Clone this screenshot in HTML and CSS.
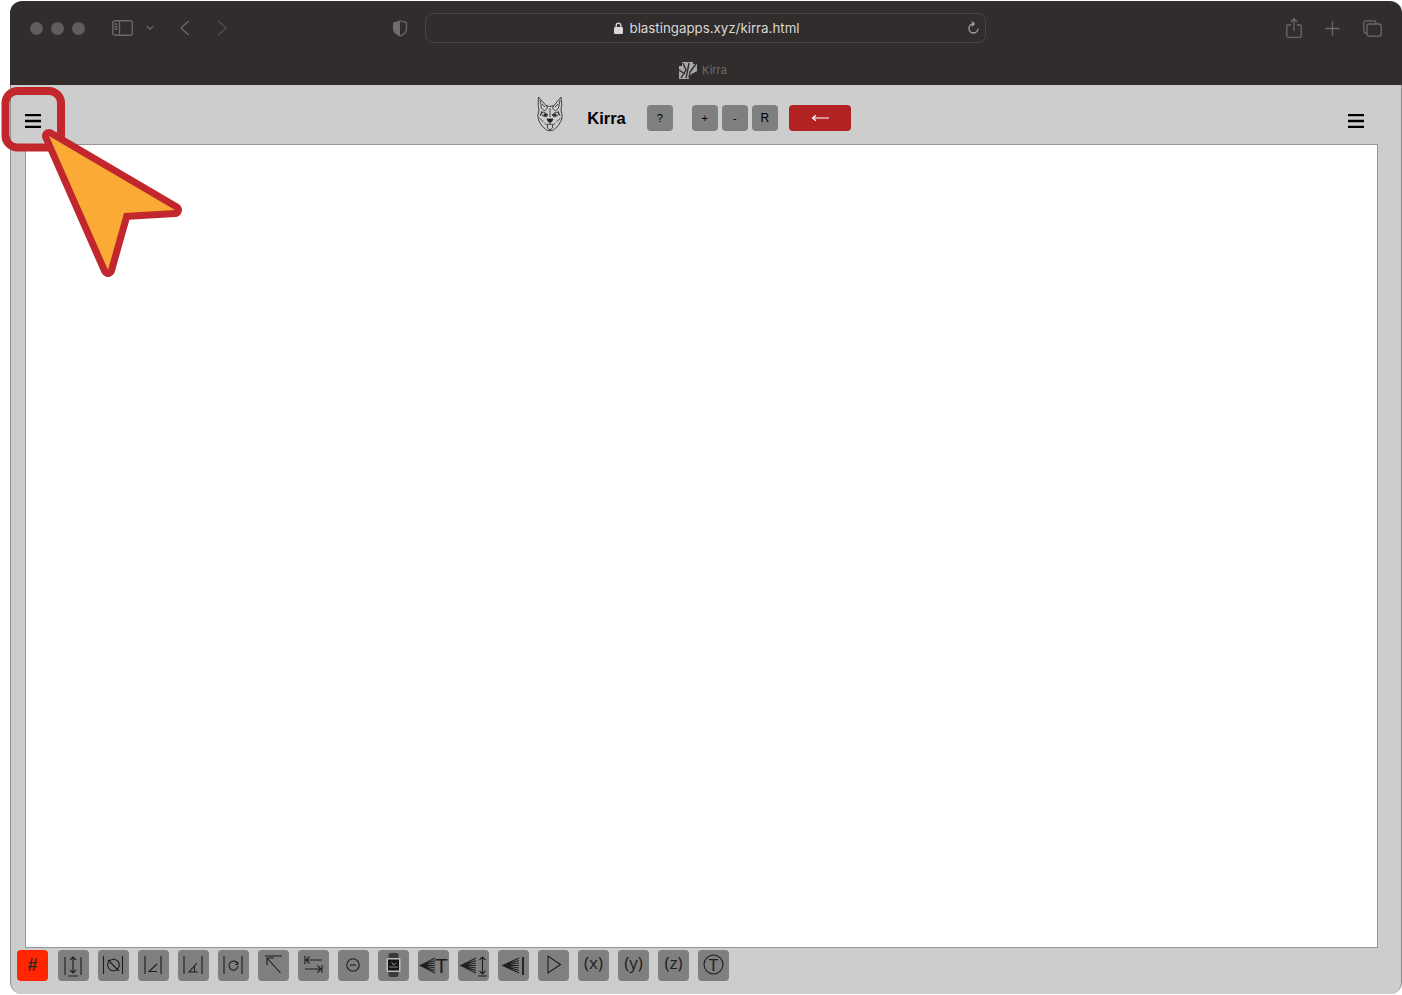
FILE: index.html
```html
<!DOCTYPE html>
<html lang="en">
<head>
    <meta charset="UTF-8">
    <title>Kirra</title>
    <link rel="stylesheet" href="styles.css">
</head>
<body>
    <div class="window">
        <div class="chrome">
            <div class="chrome-top">
                <div class="lights"><span></span><span></span><span></span></div>
                <svg class="ic-sidebar" width="21" height="16" viewBox="0 0 21 16">
                    <rect x="0.75" y="0.75" width="19.5" height="14.5" rx="2"/>
                    <path d="M7.5 1v14M2.5 4h3M2.5 6.5h3M2.5 9h3"/>
                </svg>
                <svg class="ic-chevron" width="8" height="6" viewBox="0 0 8 6"><path d="M1 1.2l3 3 3-3"/></svg>
                <svg class="ic-back" width="11" height="16" viewBox="0 0 11 16"><path d="M9.5 1L2 8l7.5 7"/></svg>
                <svg class="ic-forward" width="11" height="16" viewBox="0 0 11 16"><path d="M1.5 1L9 8l-7.5 7"/></svg>
                <svg class="ic-shield" width="16" height="17" viewBox="0 0 16 17">
                    <path class="fill-half" d="M8 0.5L1 2.5v6c0 4 3.5 6.5 7 8z"/>
                    <path d="M8 0.8l6.5 1.9v5.8c0 3.7-3 6.2-6.5 7.7"/>
                </svg>
                <div class="urlbar">
                    <span></span>
                    <div class="url">
                        <svg width="9" height="12" viewBox="0 0 9 12">
                            <path class="lock-loop" d="M2.2 5.5V3.4a2.3 2.3 0 0 1 4.6 0v2.1"/>
                            <rect class="lock-body" y="5" width="9" height="7" rx="1.2"/>
                        </svg>
                        blastingapps.xyz/kirra.html
                    </div>
                    <svg class="ic-reload" width="12" height="14" viewBox="0 0 12 14">
                        <path d="M6.5 3a4.5 4.5 0 1 0 4.5 4.8"/>
                        <path d="M5 0.8L7.2 3 5 5"/>
                    </svg>
                </div>
                <svg class="ic-share" width="16" height="20" viewBox="0 0 16 20">
                    <path d="M5 7H2.2A1.5 1.5 0 0 0 .8 8.5v9.5a1.5 1.5 0 0 0 1.4 1.3h11.6a1.5 1.5 0 0 0 1.4-1.3V8.5A1.5 1.5 0 0 0 13.8 7H11"/>
                    <path d="M8 13V1M4.8 4L8 .8 11.2 4"/>
                </svg>
                <svg class="ic-plus" width="15" height="15" viewBox="0 0 15 15"><path d="M7.5 0.5v14M0.5 7.5h14"/></svg>
                <svg class="ic-tabs" width="19" height="17" viewBox="0 0 19 17">
                    <path d="M13 3.5V2.5A2 2 0 0 0 11 .8H2.7A2 2 0 0 0 .8 2.7v8.3A2 2 0 0 0 2.5 13h1.2"/>
                    <rect x="4" y="4" width="14.2" height="12.2" rx="2.5"/>
                </svg>
            </div>
            <div class="chrome-tab">
                <svg width="18" height="17" viewBox="0 0 18 17">
                    <rect width="18" height="17" fill="#a9a7a6"/>
                    <path class="fav-rays" d="M2 16L7 8 4 1M7 16l1.500-7 1.500-8M10 16l1-6 6-8M13 16l1-4 4-2M0 8l6 4"/>
                    <path class="fav-dark" d="M10 17c0-4 3-6 8-6v6zM0 0h3v4H0zM14 0h4v2h-4z"/>
                </svg>
                <span>Kirra</span>
            </div>
        </div>

        <div class="app">
            <header class="app-header">
                <svg class="burger" width="16" height="14" viewBox="0 0 16 14"><path d="M0 1.2h16M0 7h16M0 12.8h16"/></svg>
                <div class="title-group">
                    <svg class="logo" width="26" height="36" viewBox="0 0 26 36">
                        <path d="M1.500 1L9 9.500q4 2 8 0L24 1q1.500 8 0 13 2 6 .5 10-3 7-8 10-3.500 1.500-7 0-5-3-8-10-1.500-4 .5-10-1.500-5-.5-13z"/>
                        <path d="M3 4l1.500 8 3 3 3-3-1.500-3M23 4l-1.500 8-3 3-3-3 1.500-3M5 8l3 3M21 8l-3 3"/>
                        <path d="M4 17l3-1 4 3-2 2-3-1zM22 17l-3-1-4 3 2 2 3-1z"/>
                        <path d="M13 12v9M2.500 22l4 4M23.500 22l-4 4M5 15l-2 5M21 15l2 5"/>
                        <path class="logo-dark" d="M10 23h6l-1.500 3h-3zM7 18h2.500v1.500H7zM16.500 18H19v1.500h-2.500z"/>
                        <path d="M13 26v2M7.500 27c2 2 3 2 5.500 1 2.500 1 3.500 1 5.500-1M10.500 29v3l2.500 2 2.500-2v-3"/>
                    </svg>
                    <h1>Kirra</h1>
                    <button class="btn btn-help">?</button>
                    <button class="btn">+</button>
                    <button class="btn">-</button>
                    <button class="btn btn-r">R</button>
                    <button class="btn btn-red">
                        <svg width="18" height="8" viewBox="0 0 18 8"><path d="M18 4H2M5 1.200L1.500 4 5 6.800"/></svg>
                    </button>
                </div>
                <svg class="burger" width="16" height="14" viewBox="0 0 16 14"><path d="M0 1.2h16M0 7h16M0 12.8h16"/></svg>
            </header>

            <div class="canvas"></div>

            <footer class="tools">
                <button class="tool tool-hash">#</button>
                <button class="tool"><svg viewBox="0 0 31 31"><path d="M7 7v18M23 7v18M15 7v16M12 10l3-3 3 3M12 20l3 3 3-3M10 26h10"/></svg></button>
                <button class="tool"><svg viewBox="0 0 31 31"><path d="M5.500 6v18M24.500 6v18M10 10l11 11"/><circle cx="15.500" cy="15" r="5.800"/></svg></button>
                <button class="tool"><svg viewBox="0 0 31 31"><path d="M7 6v18M23 6v18M19 14l-8 7.500h8"/></svg></button>
                <button class="tool"><svg viewBox="0 0 31 31"><path d="M6 6v18M24 6v18M19 13l-8 9h9M16.500 15.500V22"/></svg></button>
                <button class="tool"><svg viewBox="0 0 31 31"><path d="M6 6v18M24 6v18M19.500 13.500a4.500 4.500 0 1 0 .5 2.500M19.800 12v2.500h-2.500"/></svg></button>
                <button class="tool"><svg viewBox="0 0 31 31"><path d="M7 6h17M9 8l13.500 15M9 15V8h7"/></svg></button>
                <button class="tool"><svg viewBox="0 0 31 31"><path d="M7 6v8M8 10h16M11.500 6.500L8 10l3.500 3.500M24 15v8M7 19h16M19.500 15.500L23 19l-3.500 3.500"/></svg></button>
                <button class="tool"><svg viewBox="0 0 31 31"><circle cx="15" cy="15" r="6.200"/><path d="M12 15h6"/></svg></button>
                <button class="tool">
                    <svg viewBox="0 0 31 31">
                        <rect class="watch-band" x="10.500" y="3" width="10" height="24" rx="2"/>
                        <rect class="watch-case" x="8.500" y="8" width="14" height="14" rx="1.500"/>
                        <rect class="watch-face" x="10" y="9.500" width="11" height="11"/>
                        <path class="watch-hands" d="M15.500 15l3-2M15.500 15l-2-3M11 17h9"/>
                    </svg>
                </button>
                <button class="tool"><svg viewBox="0 0 31 31"><path d="M17 8L2.500 15.500 17 23M17 10.500L2.500 15.500 17 20.500M17 13L2.500 15.500 17 18M2.500 15.500H17"/><text x="17" y="23" class="tool-t">T</text></svg></button>
                <button class="tool"><svg viewBox="0 0 31 31"><path d="M18 8L3 15.500 18 23M18 10.500L3 15.500 18 20.500M18 13L3 15.500 18 18M3 15.500h15M24.500 7v17M21.500 10l3-3 3 3M21.500 21l3 3 3-3M20 26h9"/></svg></button>
                <button class="tool"><svg viewBox="0 0 31 31"><path d="M21 8L5 15.500 21 23M21 10.500L5 15.500 21 20.500M21 13L5 15.500 21 18M5 15.500h16"/><path class="thick" d="M25 7v18"/></svg></button>
                <button class="tool"><svg viewBox="0 0 31 31"><path d="M10 6v17l12.500-8.500z"/></svg></button>
                <button class="tool tool-text">(x)</button>
                <button class="tool tool-text">(y)</button>
                <button class="tool tool-text">(z)</button>
                <button class="tool"><svg viewBox="0 0 31 31"><circle cx="15.500" cy="14.500" r="9.500"/><text x="15.500" y="20.500" class="tool-t tool-t-small">T</text></svg></button>
            </footer>
        </div>
    </div>

    <svg class="callout" width="200" height="290" viewBox="0 0 200 290">
        <rect class="callout-box" x="5.500" y="91" width="55.500" height="56.500" rx="12"/>
        <path class="callout-arrow-edge" d="M49 136L175 210 124 213 108 270z"/>
        <path class="callout-arrow" d="M49 136L175 210 124 213 108 270z"/>
    </svg>
</body>
</html>
```

FILE: styles.css
```css
body {
    margin: 0;
    background: #fff;
    font-family: 'Liberation Sans', sans-serif;
}
svg {
    display: block;
    fill: none;
}
.window {
    width: 1392px;
    height: 993px;
    margin: 1px 0 0 10px;
    display: flex;
    flex-direction: column;
}

/* browser chrome */
.chrome {
    background: #302d2c;
    border-radius: 12px 12px 0 0;
    height: 84px;
    flex-shrink: 0;
}
.chrome-top {
    height: 54px;
    padding-left: 20px;
    display: flex;
    align-items: center;
}
.chrome-top svg {
    stroke: #6b6968;
    stroke-width: 1.3;
}
.lights {
    display: flex;
    gap: 8px;
}
.lights span {
    width: 13px;
    height: 13px;
    border-radius: 50%;
    background: #5f5d5c;
}
.ic-sidebar {
    margin-left: 27px;
}
.ic-chevron {
    margin-left: 13px;
}
.ic-back {
    margin-left: 25px;
}
.ic-forward {
    margin-left: 27px;
}
.chrome-top .ic-forward {
    stroke: #4f4d4c;
}
.ic-shield {
    margin-left: 164px;
}
.fill-half {
    fill: #6f6d6c;
    stroke: none;
}
.urlbar {
    width: 556px;
    height: 28px;
    margin: 0 1px 0 17px;
    padding-left: 3px;
    border: 1px solid #484544;
    border-radius: 8px;
    display: grid;
    grid-template-columns: 1fr auto 1fr;
    align-items: center;
}
.url {
    display: flex;
    align-items: center;
    gap: 6px;
    color: #d9d8d7;
    font-family: 'Inter', sans-serif;
    font-size: 13.3px;
    white-space: nowrap;
}
.chrome-top .url svg .lock-loop {
    stroke: #d9d8d7;
    fill: none;
}
.chrome-top .url svg .lock-body {
    fill: #d9d8d7;
    stroke: none;
}
.ic-reload {
    justify-self: end;
    margin-right: 6px;
}
.chrome-top .ic-reload {
    stroke: #a5a3a2;
}
.ic-share {
    margin-left: 299px;
}
.ic-plus {
    margin-left: 23px;
}
.ic-tabs {
    margin-left: 23px;
}
.chrome-tab {
    height: 30px;
    padding-right: 6px;
    display: flex;
    justify-content: center;
    align-items: center;
    gap: 5px;
    color: #6e6c6b;
    font-family: 'Inter', sans-serif;
    font-size: 11px;
}
.fav-rays {
    stroke: #302d2c;
    stroke-width: 1.4;
}
.fav-dark {
    fill: #302d2c;
}

/* page */
.app {
    flex: 1;
    display: flex;
    flex-direction: column;
    background: #cdcdcd;
    border-left: 1px solid #8e8e8e;
    border-right: 1px solid #8e8e8e;
    border-radius: 0 0 12px 12px;
    min-height: 0;
}
.app-header {
    height: 59px;
    flex-shrink: 0;
    box-sizing: border-box;
    padding: 7px 37px 0 14px;
    display: flex;
    justify-content: space-between;
    align-items: center;
}
.burger {
    stroke: #000;
    stroke-width: 2.3;
    margin-top: 5px;
}
.title-group {
    display: flex;
    align-items: center;
    margin-right: 2px;
}
.logo {
    stroke: #222;
    stroke-width: 0.8;
    margin: -9px 24px 0 1px;
}
.logo-dark {
    fill: #222;
}
h1 {
    margin: 0 21px 0 0;
    font-size: 16.5px;
    font-weight: bold;
    color: #000;
}
.btn {
    width: 26px;
    height: 26px;
    margin-right: 4px;
    padding: 0;
    border: none;
    border-radius: 4px;
    background: #7f7f7f;
    color: #000;
    font-family: 'Liberation Sans', sans-serif;
    font-size: 11px;
}
.btn-help {
    margin-right: 19px;
}
.btn-r {
    margin-right: 11px;
    font-size: 12px;
}
.btn-red {
    width: 62px;
    margin-right: 0;
    background: #b22222;
    display: flex;
    justify-content: center;
    align-items: center;
}
.btn-red svg {
    stroke: #fff;
    stroke-width: 1.2;
}
.canvas {
    flex: 1;
    margin: 0 23px 0 14px;
    background: #fff;
    border: 1px solid #959595;
}
.tools {
    height: 46px;
    flex-shrink: 0;
    box-sizing: border-box;
    padding: 2px 0 0 6px;
    display: flex;
    align-items: flex-start;
    gap: 9px;
}
.tool {
    width: 31px;
    height: 31px;
    padding: 0;
    border: none;
    border-radius: 4px;
    background: #7f7f7f;
    color: #1e1e1e;
    font-family: 'Liberation Sans', sans-serif;
}
.tool svg {
    width: 31px;
    height: 31px;
    stroke: #1e1e1e;
    stroke-width: 1.1;
}
.tool-hash {
    margin-right: 1px;
    background: #ff2600;
    font-size: 18px;
    font-weight: bold;
    color: #3a2320;
}
.tool-text {
    font-family: 'Open Sans', sans-serif;
    font-size: 17px;
    padding-bottom: 6px;
    white-space: nowrap;
    overflow: hidden;
}
.tool-t {
    fill: #1e1e1e;
    stroke: none;
    font-family: 'Liberation Sans', sans-serif;
    font-size: 21px;
}
.tool-t-small {
    font-size: 16px;
    text-anchor: middle;
}
.tool .thick {
    stroke-width: 1.8;
}
.watch-band {
    fill: #3a3a3a;
    stroke: none;
}
.watch-case {
    fill: #bdbdbd;
    stroke: none;
}
.watch-face {
    fill: #141414;
    stroke: none;
}
.tool .watch-hands {
    stroke: #bbb;
    stroke-width: 0.7;
}

/* annotation drawn on top of the screenshot */
.callout {
    position: absolute;
    top: 0;
    left: 0;
}
.callout-box {
    stroke: #c1272d;
    stroke-width: 8;
}
.callout-arrow-edge {
    fill: #c1272d;
    stroke: #c1272d;
    stroke-width: 14;
    stroke-linejoin: round;
}
.callout-arrow {
    fill: #fbab35;
}
```
